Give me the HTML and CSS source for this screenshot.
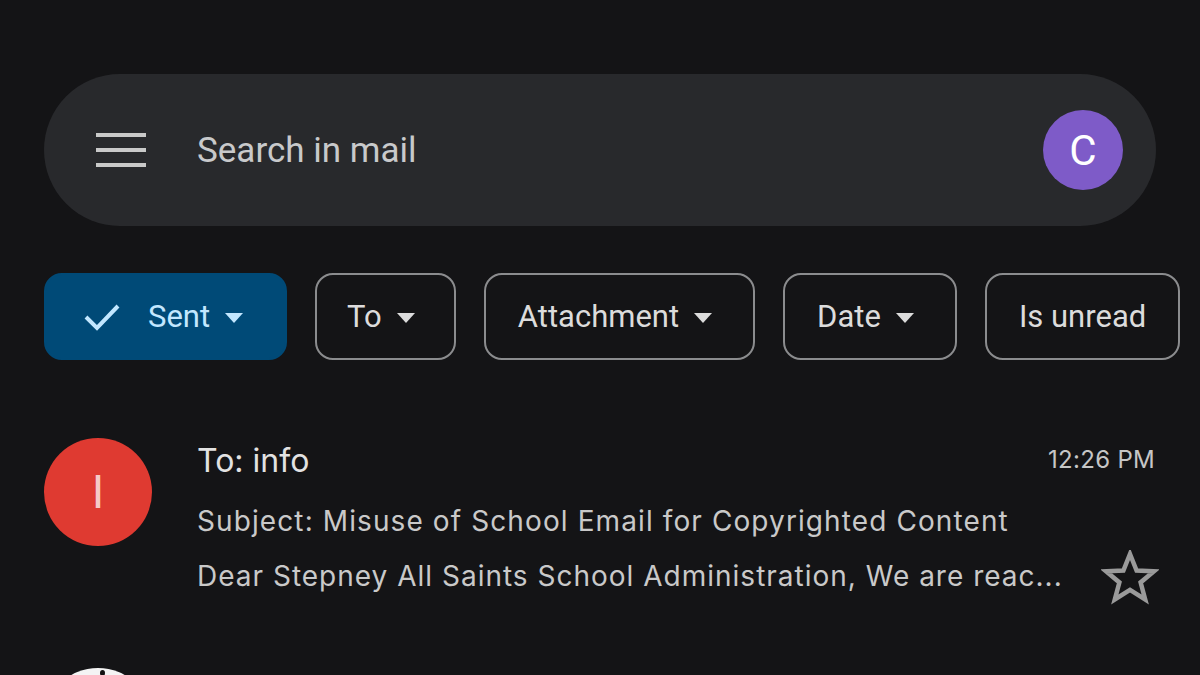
FILE: index.html
```html
<!DOCTYPE html>
<html>
<head>
<meta charset="utf-8">
<link rel="stylesheet" href="styles.css">
</head>
<body>
<div class="page">
  <header class="search">
    <svg class="menu" width="50" height="34" viewBox="0 0 50 34">
      <rect x="0" y="0" width="50" height="4" fill="#c9c9c9"/>
      <rect x="0" y="15" width="50" height="4" fill="#c9c9c9"/>
      <rect x="0" y="30" width="50" height="4" fill="#c9c9c9"/>
    </svg>
    <div class="placeholder">Search in mail</div>
    <div class="me">C</div>
  </header>

  <nav class="chips">
    <div class="chip chip-on">
      <svg class="check" width="38" height="30" viewBox="0 0 38 30">
        <path d="M3 15 L14 26 L35 4" fill="none" stroke="#c2e7ff" stroke-width="4"/>
      </svg>
      <span>Sent</span>
      <span class="caret"></span>
    </div>
    <div class="chip chip-to"><span>To</span><span class="caret"></span></div>
    <div class="chip"><span>Attachment</span><span class="caret"></span></div>
    <div class="chip"><span>Date</span><span class="caret"></span></div>
    <div class="chip"><span>Is unread</span></div>
  </nav>

  <section class="mail">
    <div class="avatar">I</div>
    <div class="body">
      <div class="top">
        <div class="to">To: info</div>
        <div class="time">12:26 PM</div>
      </div>
      <div class="subject">Subject: Misuse of School Email for Copyrighted Content</div>
      <div class="bottom">
        <div class="preview">Dear Stepney All Saints School Administration, We are reac...</div>
        <svg class="star" width="58" height="56" viewBox="0 0 58 56">
          <path d="M29 4 L35.6 20.5 L53 21.3 L39.6 32.4 L44.2 49.5 L29 39.8 L13.8 49.5 L18.4 32.4 L5 21.3 L22.4 20.5 Z" fill="none" stroke="#9a9a9a" stroke-width="4.5" stroke-linejoin="miter"/>
        </svg>
      </div>
    </div>
  </section>

  <section class="mail next">
    <div class="avatar white"><span class="dot"></span></div>
  </section>
</div>
</body>
</html>
```

FILE: styles.css
```css
html, body {
  margin: 0;
  padding: 0;
  background: #141416;
  width: 1200px;
  height: 675px;
  overflow: hidden;
}
.page {
  padding: 74px 44px 0 44px;
  font-family: Roboto, "Noto Sans", sans-serif;
  height: 675px;
  box-sizing: border-box;
  overflow: hidden;
}
.search {
  height: 152px;
  border-radius: 76px;
  background: #28292c;
  display: flex;
  align-items: center;
  padding: 0 33px 0 52px;
}
.menu {
  flex: none;
}
.placeholder {
  margin-left: 51px;
  font-size: 35px;
  color: #c8c9cb;
  flex: 1;
}
.me {
  width: 80px;
  height: 80px;
  border-radius: 50%;
  background: #7e5bc8;
  color: #fff;
  font-size: 42px;
  display: flex;
  align-items: center;
  justify-content: center;
}
.chips {
  margin-top: 47px;
  display: flex;
  gap: 28px;
  white-space: nowrap;
}
.chip {
  flex: none;
  height: 87px;
  box-sizing: border-box;
  border: 2px solid #8b8c8e;
  border-radius: 18px;
  display: flex;
  align-items: center;
  padding: 0 32px;
  gap: 15px;
  color: #dcdcdc;
  font-size: 31px;
}
.chip-to {
  padding: 0 30px;
}
.chip-on {
  background: #004a77;
  border-color: #004a77;
  color: #c2e7ff;
  padding-left: 37px;
  padding-right: 33px;
  gap: 0;
}
.chip-on .check { margin-right: 27px; }
.chip-on .caret { margin-left: 15px; border-top-color: #c2e7ff; }
.caret {
  width: 0;
  height: 0;
  border-left: 9.5px solid transparent;
  border-right: 9.5px solid transparent;
  border-top: 10px solid #dcdcdc;
  margin-right: 9px;
  margin-top: 2px;
}
.mail {
  margin-top: 78px;
  display: flex;
  gap: 45px;
  height: 230px;
  font-family: Inter, "Noto Sans", sans-serif;
}
.avatar {
  flex: none;
  width: 108px;
  height: 108px;
  border-radius: 50%;
  background: #df3a31;
  color: #f6c9c8;
  font-size: 46px;
  display: flex;
  align-items: center;
  justify-content: center;
  font-family: Roboto, sans-serif;
}
.body {
  flex: 1;
  margin-top: 3px;
}
.top {
  display: flex;
  justify-content: space-between;
  align-items: center;
  height: 40px;
}
.to {
  font-size: 32px;
  line-height: 40px;
  color: #e2e2e2;
}
.time {
  font-size: 24px;
  color: #c6c6c6;
  margin-right: 1px;
  margin-top: -4px;
  letter-spacing: 0.3px;
}
.subject {
  margin-top: 22px;
  font-size: 28px;
  line-height: 36px;
  letter-spacing: 1.1px;
  color: #c9c9c9;
}
.bottom {
  display: flex;
  justify-content: space-between;
  align-items: center;
  margin-top: 19px;
  height: 36px;
}
.preview {
  font-size: 28px;
  line-height: 36px;
  letter-spacing: 1px;
  color: #c9c9c9;
}
.star { margin-right: -3px; margin-top: 4px; }
.next {
  margin-top: 0;
  height: 20px;
}
.white {
  background: #f4f4f4;
  position: relative;
}
.dot {
  position: absolute;
  left: 56px;
  top: 2px;
  width: 5px;
  height: 6px;
  border-radius: 50%;
  background: #111;
}
```
